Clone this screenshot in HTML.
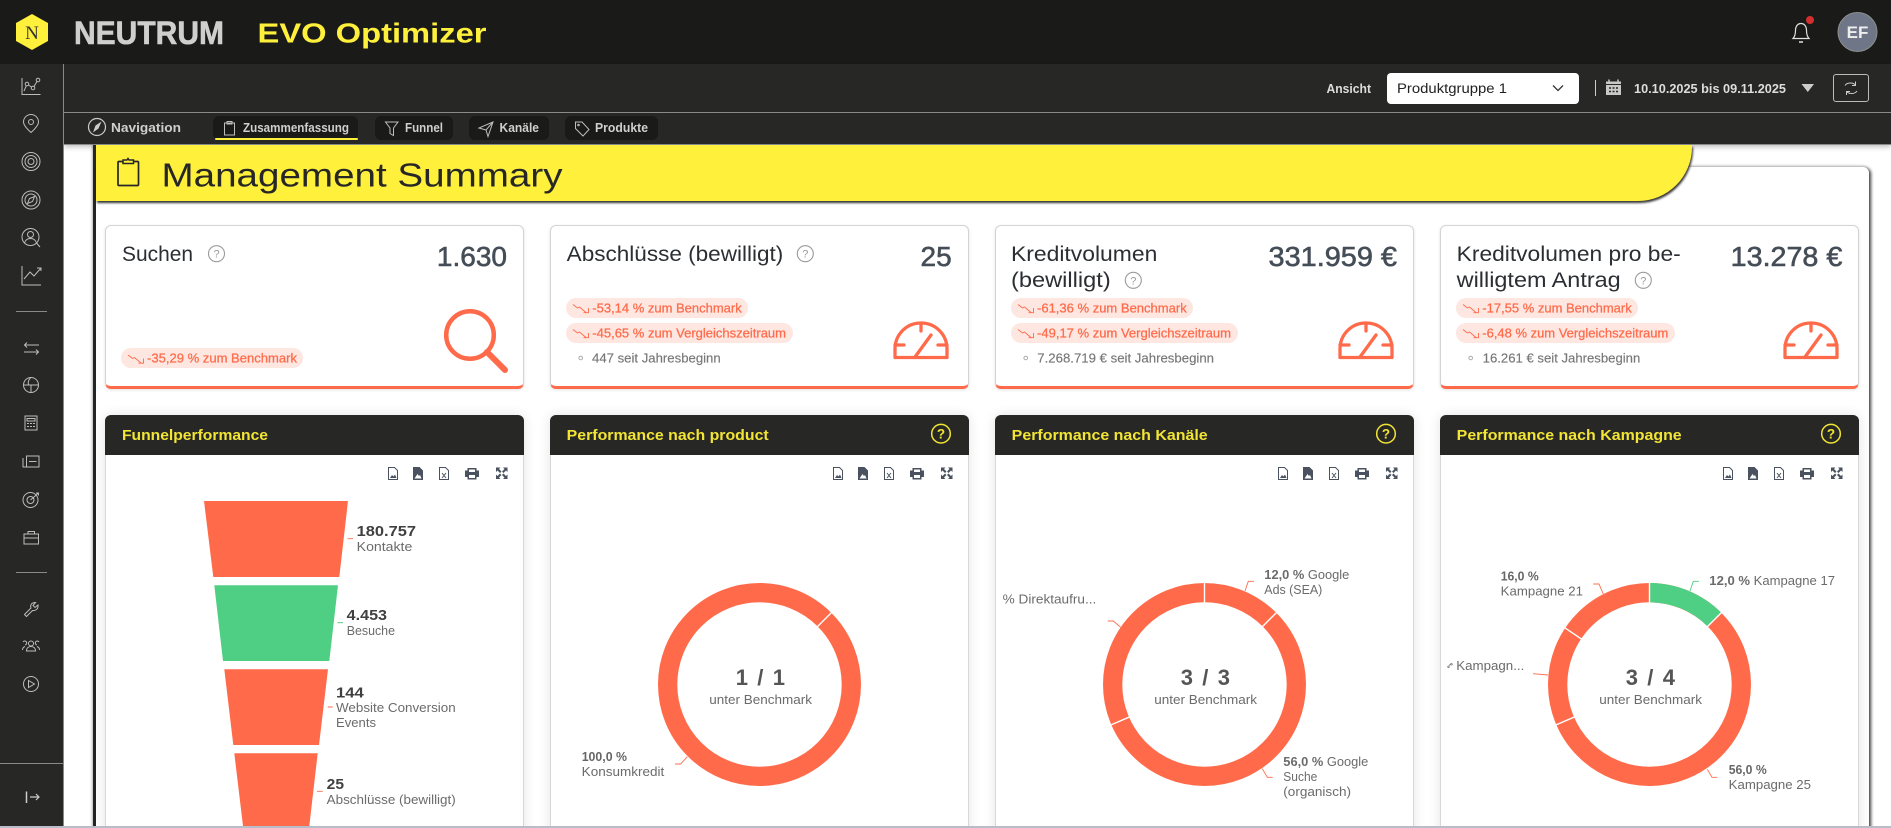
<!DOCTYPE html>
<html lang="de"><head><meta charset="utf-8"><title>EVO Optimizer</title>
<style>
html,body{margin:0;padding:0;width:1891px;height:828px;overflow:hidden;background:#fff;font-family:"Liberation Sans",sans-serif}
#root{position:relative;width:1891px;height:828px;overflow:hidden;background:#fff}
.b{position:absolute;box-sizing:border-box}
.kpi{top:225px;width:419px;height:164px;background:#fff;border:1px solid #d4d4d4;border-bottom:3px solid #ff6b4a;border-radius:6px;box-shadow:0 1px 3px rgba(0,0,0,.12)}
.chart{top:415px;width:419px;height:420px;background:#fff;border:1px solid #d8d8d8;border-top:0;border-radius:6px 6px 0 0;box-shadow:0 0 12px rgba(0,0,0,.11)}
.chart i{display:block;position:absolute;left:-1px;right:-1px;top:0;height:40px;background:#272726;border-radius:6px 6px 0 0}
svg{position:absolute;left:0;top:0}
text{font-family:"Liberation Sans",sans-serif}
.ti{font-size:21px;fill:#2b2f33}
.va{font-size:28px;fill:#454d57;stroke:#454d57;stroke-width:.6}
.bd{font-size:12.7px;fill:#ff6b4a;stroke:#ff6b4a;stroke-width:.25}
.se{font-size:12.7px;fill:#777;stroke:#777;stroke-width:.15}
.ch{font-size:14.5px;font-weight:bold;fill:#f2e535}
.lb{font-size:12.5px;fill:#6b6b6b}
.lbb{font-size:12.5px;fill:#666;font-weight:bold}
.fv{font-size:15px;font-weight:bold;fill:#404040}
.c1{font-size:22px;font-weight:bold;fill:#555}
.ic{fill:none;stroke:#bdbdbd;stroke-width:1}
.nv{font-size:12.5px;font-weight:bold;fill:#cfcfcf}
</style></head><body><div id="root">
<div class="b" style="left:0;top:0;width:1891px;height:64px;background:#1a1a18"></div>
<div class="b" style="left:64px;top:64px;width:1827px;height:81px;background:#272726;border-bottom:1px solid #8a8a8a;box-shadow:0 2px 5px rgba(0,0,0,.25)"></div>
<div class="b" style="left:0;top:64px;width:64px;height:764px;background:#272726;border-right:1px solid #8a8a8a"></div>
<div class="b" style="left:64px;top:112px;width:1827px;height:1px;background:#8a8a8a"></div>
<div class="b" style="left:93px;top:145px;width:3px;height:683px;background:#272726;box-shadow:-1px 0 2px rgba(0,0,0,.3)"></div>
<div class="b" style="left:96px;top:167px;width:1773px;height:670px;background:#fff;border-radius:6px;box-shadow:2px 1px 3px #444,0 -1px 3px rgba(0,0,0,.2)"></div>
<div class="b" style="left:96px;top:145px;width:1596px;height:56px;background:#fff03c;border-radius:0 0 54px 0;box-shadow:1px 2px 2px #333"></div>
<div class="b kpi" style="left:105px"></div><div class="b kpi" style="left:550px"></div><div class="b kpi" style="left:995px"></div><div class="b kpi" style="left:1440px"></div>
<div class="b chart" style="left:105px"><i></i></div><div class="b chart" style="left:550px"><i></i></div><div class="b chart" style="left:995px"><i></i></div><div class="b chart" style="left:1440px"><i></i></div>
<div class="b" style="left:213px;top:116px;width:145px;height:24px;background:#1a1a18;border-radius:6px"></div>
<div class="b" style="left:215px;top:138px;width:143px;height:2px;background:#fff03c;border-radius:1px"></div>
<div class="b" style="left:375px;top:116px;width:78px;height:24px;background:#1a1a18;border-radius:6px"></div>
<div class="b" style="left:469px;top:116px;width:80px;height:24px;background:#1a1a18;border-radius:6px"></div>
<div class="b" style="left:565px;top:116px;width:93px;height:24px;background:#1a1a18;border-radius:6px"></div>
<div class="b" style="left:1387px;top:73px;width:192px;height:31px;background:#fff;border-radius:4px"></div>
<div class="b" style="left:1833px;top:74px;width:36px;height:28px;border:1px solid #bbb;border-radius:3px"></div>

<svg width="1891" height="828" viewBox="0 0 1891 828">
<defs>
<g id="h"><circle r="8" fill="none" stroke="#9a9a9a" stroke-width="1.1"/><text y="4" text-anchor="middle" font-size="11" fill="#9a9a9a">?</text></g>
<g id="hy"><circle r="9.3" fill="none" stroke="#f2e535" stroke-width="1.5"/><text y="4.8" text-anchor="middle" font-size="13.5" font-weight="bold" fill="#f2e535">?</text></g>
<path id="t" d="M0 .5L4.5 4L6.5 3L13 8.5M15.5 4V8.7H10.5" fill="none" stroke="#ff6b4a" stroke-width=".9"/>
<g id="g" fill="none" stroke="#ff6b4a" stroke-width="3.3" stroke-linejoin="round" stroke-linecap="round">
<path d="M2 36.5V28C2 14 13 2 28 2S54 14 54 28V36.5Z"/><path d="M28 2V10M2 24H11M54 24H45M22 36L38 14"/></g>
<g id="tb">
<g fill="none" stroke="#49525e" stroke-width="1"><path d="M283.500 467.500H289.500L292.500 470.500V479.500H283.500Z"/></g><path d="M285 478L287 475L288.500 476.500L290 474.500L291.500 478Z" fill="#49525e"/>
<path d="M308 467H314.500L318 470.500V480H308Z" fill="#49525e"/><path d="M309.500 478.500L312.500 474L314 476L315 475L316.500 478.500Z" fill="#fff"/>
<g fill="none" stroke="#49525e" stroke-width="1"><path d="M334.500 467.500H340.500L343.500 470.500V479.500H334.500Z"/><path d="M337 473L341 478M341 473L337 478"/></g>
<path d="M362.500 468H371.500V470.500H374V477H371.500V479.500H362.500V477H360V470.500H362.500ZM364 469.500V472H370V469.500ZM364 475V478H370V475Z" fill="#49525e" fill-rule="evenodd"/>
<path d="M391 467.500H395.500L394 469L396.500 471.500L395 473L392.500 470.500L391 472ZM402.500 467.500H398L399.500 469L397 471.500L398.500 473L401 470.500L402.500 472ZM391 479H395.500L394 477.500L396.500 475L395 473.500L392.500 476L391 474.500ZM402.500 479H398L399.500 477.500L397 475L398.500 473.500L401 476L402.500 474.500Z" fill="#49525e"/>
</g>
</defs>

<!-- top bar -->
<path d="M32 14L48 23V41L32 50L16 41V23Z" fill="#fff03c"/>
<text x="32" y="39" text-anchor="middle" font-size="19" style="font-family:'Liberation Serif',serif" fill="#333">N</text>
<text x="74" y="44" font-size="32" font-weight="bold" fill="#cfcfcf" stroke="#cfcfcf" stroke-width=".6" textLength="150" lengthAdjust="spacingAndGlyphs">NEUTRUM</text>
<text x="257.500" y="42.500" font-size="28" font-weight="bold" fill="#fff03c" textLength="229" lengthAdjust="spacingAndGlyphs">EVO Optimizer</text>
<path d="M1793 38.500c1.800-2 2.500-4 2.500-8c0-4 2-7 5.500-7s5.500 3 5.500 7c0 4 .7 6 2.500 8Z" fill="none" stroke="#e0e0e0" stroke-width="1.200"/><path d="M1799 42h4" stroke="#e0e0e0" stroke-width="1.500"/>
<circle cx="1810" cy="20" r="4" fill="#d32f2f"/>
<circle cx="1857.500" cy="32" r="19.500" fill="#6e7688" stroke="#8f8f8f" stroke-width="1"/>
<text x="1857.500" y="38" text-anchor="middle" font-size="17" font-weight="bold" fill="#eee">EF</text>

<!-- toolbar -->
<text x="1326.500" y="93" font-size="12.500" font-weight="bold" fill="#ddd" textLength="44.500" lengthAdjust="spacingAndGlyphs">Ansicht</text>
<text x="1397" y="93" font-size="13.500" fill="#222" textLength="110" lengthAdjust="spacingAndGlyphs">Produktgruppe 1</text>
<path d="M1553 85.500L1558 90.500L1563 85.500" fill="none" stroke="#333" stroke-width="1.300"/>
<path d="M1595.500 80V96" stroke="#ccc" stroke-width="1"/>
<path d="M1606 81.500H1621V95H1606Z" fill="#c8c8c8"/><path d="M1609 79.500V82M1618 79.500V82" stroke="#c8c8c8" stroke-width="1.500"/>
<path d="M1606 84.500H1621" stroke="#272726" stroke-width="1"/><path d="M1609 88h2M1612.500 88h2M1616 88h2M1609 91.500h2M1612.500 91.500h2M1616 91.500h2" stroke="#272726" stroke-width="1.500"/>
<text x="1634" y="93" font-size="12.500" font-weight="bold" fill="#ddd" textLength="152" lengthAdjust="spacingAndGlyphs">10.10.2025 bis 09.11.2025</text>
<path d="M1801.500 84H1814L1807.800 92Z" fill="#ccc"/>
<path d="M1845 85.500c2-3 7.500-3.500 10.500-.5M1855.500 81.500V85.500H1852M1857 91c-2 3-7.500 3.500-10.500.5M1846.500 95V91.500H1850" fill="none" stroke="#ccc" stroke-width="1"/>

<!-- nav -->
<circle cx="97" cy="127" r="8.500" fill="none" stroke="#ccc" stroke-width="1.200"/><path d="M93 132.500L95.500 125.500L101.500 121.500L98.500 128.500Z" fill="#ccc"/>
<text class="nv" x="111" y="132" textLength="70" lengthAdjust="spacingAndGlyphs">Navigation</text>
<rect class="ic" x="224.500" y="123" width="10" height="12"/><rect class="ic" x="227" y="121.500" width="5" height="2.500"/>
<text class="nv" x="243" y="132" textLength="106" lengthAdjust="spacingAndGlyphs">Zusammenfassung</text>
<path class="ic" d="M385.500 122H398L393.500 128V135.500L390 133.500V128Z"/>
<text class="nv" x="405" y="132" textLength="38" lengthAdjust="spacingAndGlyphs">Funnel</text>
<path class="ic" d="M493 122L479 128L486 130L488 136.500ZM486 130L493 122"/>
<text class="nv" x="499.500" y="132" textLength="39.500" lengthAdjust="spacingAndGlyphs">Kanäle</text>
<path class="ic" d="M575.500 122H582L589 129.500L583 136L575.500 128.500Z"/><circle class="ic" cx="578.500" cy="125" r=".8"/>
<text class="nv" x="595" y="132" textLength="53" lengthAdjust="spacingAndGlyphs">Produkte</text>

<!-- sidebar -->
<g class="ic">
<path d="M22 78V94.500H40.500"/><circle cx="27" cy="84" r="1.800"/><circle cx="33" cy="88" r="1.800"/><circle cx="38" cy="80" r="1.800"/><path d="M24 91L26.300 85.700M28.500 85L31.500 87M34 86.500L37 81.500"/>
<path d="M31 132.500C26 128 23.500 125 23.500 122a7.500 7.500 0 0 1 15 0C38.500 125 36 128 31 132.500Z"/><circle cx="31" cy="122" r="2.500"/>
<circle cx="31" cy="161.500" r="9"/><circle cx="31" cy="161.500" r="6"/><circle cx="31" cy="161.500" r="3"/>
<circle cx="31" cy="200" r="9"/><circle cx="31" cy="200" r="6"/><path d="M27.500 203.500L29.500 198.500L34.500 196.500L32.500 201.500Z"/>
<circle cx="30.500" cy="237" r="8.500"/><circle cx="30.500" cy="234.500" r="3"/><path d="M24.500 243c1-3.500 3-4.500 6-4.500s5 1 6 4.500M36.500 243L40 247"/>
<path d="M22 266V285H41"/><path d="M24 279L30 272L34 276L41 268M37 268H41V271"/>
<path d="M39 345H24.500M27 342.500L24.500 345L27 347.500M24 352H38.500M36 349.500L38.500 352L36 354.500"/>
<circle cx="31" cy="385" r="7.500"/><path d="M23.500 385H38.500M31 385V392.500M31 377.500C28 380 28 383 28.500 385"/>
<rect x="25" y="416" width="12" height="14"/><path d="M27 418.500H35V421H27ZM27 423.500h2M30 423.500h2M33 423.500h2M27 426.500h2M30 426.500h2M33 426.500h2"/>
<rect x="26.500" y="456" width="12.500" height="11"/><path d="M23 458V467H26.500M29 461.500H36.500"/>
<circle cx="30.500" cy="500" r="7.500"/><circle cx="30.500" cy="500" r="3.500"/><path d="M30.500 500L38.500 493M36 493H38.500V495.500"/>
<rect x="24" y="534" width="14.500" height="10"/><path d="M24 538H38.500M28 534V531.500H34.500V534"/>
<path d="M24.500 614.500L31 608C30 605 31.500 602.500 35.500 602.500L33 605.500L35 607.500L38 605C38.500 609 35.500 611 32.500 610.500L26.500 616.500Z"/>
<circle cx="31" cy="643.500" r="2.500"/><path d="M26.500 651c0-3 2-4.500 4.500-4.500s4.500 1.500 4.500 4.500ZM25 645a2 2 0 1 0-2-3M22.500 650c0-2 1-3 2.500-3.500M37 645a2 2 0 1 1 2-3M39.500 650c0-2-1-3-2.500-3.500"/>
<circle cx="31" cy="684" r="7.500"/><path d="M28.500 680.500L34.500 684L28.500 687.500Z"/>
</g>
<g stroke="#8a8a8a" stroke-width="1"><path d="M16 311.500H47M16 572.500H47M0 763.500H63"/></g>
<path d="M26.500 791.500V803" stroke="#ccc" stroke-width="1.500"/><path d="M30 797H39M36 794L39 797L36 800" fill="none" stroke="#ccc" stroke-width="1.200"/>

<!-- header -->
<rect x="118" y="161.500" width="20.500" height="24" fill="none" stroke="#272726" stroke-width="1.700" rx="1"/>
<path d="M123 163.500V160H127L128 158.500L129 160H133.500V163.500Z" fill="#fff03c" stroke="#272726" stroke-width="1.500"/>
<text x="161.500" y="186.700" font-size="33.500" fill="#272726" textLength="401" lengthAdjust="spacingAndGlyphs">Management Summary</text>

<!-- KPI 1 -->
<text class="ti" x="122" y="261" textLength="71" lengthAdjust="spacingAndGlyphs">Suchen</text><use href="#h" x="216.500" y="253.700"/>
<text class="va" x="507" y="266" text-anchor="end">1.630</text>
<rect x="121" y="348" width="182" height="20" rx="10" fill="#fee6e1"/><use href="#t" x="128" y="354.500"/>
<text class="bd" x="147" y="362.300" textLength="150" lengthAdjust="spacingAndGlyphs">-35,29 % zum Benchmark</text>
<circle cx="470" cy="335" r="23.800" fill="none" stroke="#ff6b4a" stroke-width="4.500"/><path d="M487 352L505 370" stroke="#ff6b4a" stroke-width="6" stroke-linecap="round"/>

<!-- KPI 2 -->
<text class="ti" x="566.700" y="261" textLength="216.600" lengthAdjust="spacingAndGlyphs">Abschlüsse (bewilligt)</text><use href="#h" x="805.300" y="253.700"/>
<text class="va" x="951.700" y="266" text-anchor="end">25</text>
<rect x="566" y="298" width="182" height="20" rx="10" fill="#fee6e1"/><use href="#t" x="573" y="304"/>
<text class="bd" x="592.300" y="312.300" textLength="149.400" lengthAdjust="spacingAndGlyphs">-53,14 % zum Benchmark</text>
<rect x="566" y="323" width="227" height="20" rx="10" fill="#fee6e1"/><use href="#t" x="573" y="329"/>
<text class="bd" x="592.300" y="337.300" textLength="193.700" lengthAdjust="spacingAndGlyphs">-45,65 % zum Vergleichszeitraum</text>
<circle cx="580.700" cy="358" r="1.800" fill="none" stroke="#aaa"/>
<text class="se" x="592" y="362.300" textLength="128.700" lengthAdjust="spacingAndGlyphs">447 seit Jahresbeginn</text>
<use href="#g" x="893" y="321"/>

<!-- KPI 3 -->
<text class="ti" x="1011" y="261" textLength="146.300" lengthAdjust="spacingAndGlyphs">Kreditvolumen</text>
<text class="ti" x="1011" y="287" textLength="99.700" lengthAdjust="spacingAndGlyphs">(bewilligt)</text><use href="#h" x="1133.300" y="280.300"/>
<text class="va" x="1397" y="266" text-anchor="end" textLength="128.500" lengthAdjust="spacingAndGlyphs">331.959 €</text>
<rect x="1011" y="298" width="182" height="20" rx="10" fill="#fee6e1"/><use href="#t" x="1018" y="304"/>
<text class="bd" x="1037" y="312.300" textLength="149.700" lengthAdjust="spacingAndGlyphs">-61,36 % zum Benchmark</text>
<rect x="1011" y="323" width="227" height="20" rx="10" fill="#fee6e1"/><use href="#t" x="1018" y="329"/>
<text class="bd" x="1037" y="337.300" textLength="194" lengthAdjust="spacingAndGlyphs">-49,17 % zum Vergleichszeitraum</text>
<circle cx="1025.700" cy="358" r="1.800" fill="none" stroke="#aaa"/>
<text class="se" x="1037.300" y="362.300" textLength="176.700" lengthAdjust="spacingAndGlyphs">7.268.719 € seit Jahresbeginn</text>
<use href="#g" x="1338" y="321"/>

<!-- KPI 4 -->
<text class="ti" x="1456.700" y="261" textLength="224" lengthAdjust="spacingAndGlyphs">Kreditvolumen pro be-</text>
<text class="ti" x="1456.700" y="287" textLength="164" lengthAdjust="spacingAndGlyphs">willigtem Antrag</text><use href="#h" x="1643.300" y="280.300"/>
<text class="va" x="1842.300" y="266" text-anchor="end" textLength="111.600" lengthAdjust="spacingAndGlyphs">13.278 €</text>
<rect x="1456" y="298" width="182" height="20" rx="10" fill="#fee6e1"/><use href="#t" x="1463" y="304"/>
<text class="bd" x="1482.300" y="312.300" textLength="149.400" lengthAdjust="spacingAndGlyphs">-17,55 % zum Benchmark</text>
<rect x="1456" y="323" width="219" height="20" rx="10" fill="#fee6e1"/><use href="#t" x="1463" y="329"/>
<text class="bd" x="1482.300" y="337.300" textLength="186" lengthAdjust="spacingAndGlyphs">-6,48 % zum Vergleichszeitraum</text>
<circle cx="1470.700" cy="358" r="1.800" fill="none" stroke="#aaa"/>
<text class="se" x="1482.700" y="362.300" textLength="157.600" lengthAdjust="spacingAndGlyphs">16.261 € seit Jahresbeginn</text>
<use href="#g" x="1783" y="321"/>

<!-- chart headers -->
<text class="ch" x="122" y="440" textLength="146" lengthAdjust="spacingAndGlyphs">Funnelperformance</text>
<text class="ch" x="566.700" y="440" textLength="202" lengthAdjust="spacingAndGlyphs">Performance nach product</text><use href="#hy" x="941" y="433.700"/>
<text class="ch" x="1011.700" y="440" textLength="196" lengthAdjust="spacingAndGlyphs">Performance nach Kanäle</text><use href="#hy" x="1386" y="433.700"/>
<text class="ch" x="1456.700" y="440" textLength="225" lengthAdjust="spacingAndGlyphs">Performance nach Kampagne</text><use href="#hy" x="1831" y="433.700"/>
<use href="#tb" x="105"/><use href="#tb" x="550"/><use href="#tb" x="995"/><use href="#tb" x="1440"/>

<!-- funnel -->
<path d="M204 501H348L339.300 577H213.300Z" fill="#ff6b4a"/>
<path d="M214.300 585.300H338L329.300 661H223Z" fill="#4fcf84"/>
<path d="M224.300 669.300H328L319 745H233.300Z" fill="#ff6b4a"/>
<path d="M234.300 753.300H317.700L309.300 826H243Z" fill="#ff6b4a"/>
<path d="M347.500 538.700H353M327.700 707H332.700M317 791.300H322.700" stroke="#ff6b4a" stroke-width=".9"/>
<path d="M337.500 622.700H343" stroke="#4fcf84" stroke-width="1"/>
<text class="fv" x="356.700" y="536" textLength="59.300" lengthAdjust="spacingAndGlyphs">180.757</text>
<text class="lb" x="356.700" y="551" textLength="55.600" lengthAdjust="spacingAndGlyphs">Kontakte</text>
<text class="fv" x="346.700" y="620" textLength="40.300" lengthAdjust="spacingAndGlyphs">4.453</text>
<text class="lb" x="346.700" y="635" textLength="48.300" lengthAdjust="spacingAndGlyphs">Besuche</text>
<text class="fv" x="336" y="697.300" textLength="27.700" lengthAdjust="spacingAndGlyphs">144</text>
<text class="lb" x="336" y="712" textLength="119.700" lengthAdjust="spacingAndGlyphs">Website Conversion</text>
<text class="lb" x="336" y="727" textLength="40" lengthAdjust="spacingAndGlyphs">Events</text>
<text class="fv" x="326.700" y="789" textLength="17.300" lengthAdjust="spacingAndGlyphs">25</text>
<text class="lb" x="326.700" y="804" textLength="129" lengthAdjust="spacingAndGlyphs">Abschlüsse (bewilligt)</text>

<!-- donut 1 -->
<circle cx="759.500" cy="684.500" r="91.850" fill="none" stroke="#ff6b4a" stroke-width="19.300"/>
<path d="M816.800 627.200L832.300 611.700" stroke="#fff" stroke-width="1.400"/>
<text class="c1" x="735.700" y="685" textLength="49.300" lengthAdjust="spacing">1 / 1</text>
<text class="lb" x="709.300" y="704" textLength="102.700" lengthAdjust="spacingAndGlyphs">unter Benchmark</text>
<text class="lbb" x="581.700" y="761" textLength="45.300" lengthAdjust="spacingAndGlyphs">100,0 %</text>
<text class="lb" x="581.700" y="776" textLength="82.600" lengthAdjust="spacingAndGlyphs">Konsumkredit</text>
<path d="M675 764H680.700L687.300 756.700" fill="none" stroke="#ff6b4a" stroke-width=".9"/>

<!-- donut 2 -->
<circle cx="1204.500" cy="684.500" r="91.850" fill="none" stroke="#ff6b4a" stroke-width="19.300"/>
<path d="M1204.500 603.500V581.500M1261.800 627.200L1277.300 611.700M1130.100 716.700L1109.900 725.400" stroke="#fff" stroke-width="1.400"/>
<text class="c1" x="1180.700" y="685" textLength="49.300" lengthAdjust="spacing">3 / 3</text>
<text class="lb" x="1154.300" y="704" textLength="102.700" lengthAdjust="spacingAndGlyphs">unter Benchmark</text>
<text class="lb" x="1264.300" y="579" textLength="85" lengthAdjust="spacingAndGlyphs"><tspan font-weight="bold">12,0 %</tspan> Google</text>
<text class="lb" x="1264.300" y="594" textLength="58" lengthAdjust="spacingAndGlyphs">Ads (SEA)</text>
<text class="lb" x="1002.700" y="603.300" textLength="93.600" lengthAdjust="spacingAndGlyphs">% Direktaufru...</text>
<text class="lb" x="1283.300" y="766" textLength="85" lengthAdjust="spacingAndGlyphs"><tspan font-weight="bold">56,0 %</tspan> Google</text>
<text class="lb" x="1283.300" y="781" textLength="34" lengthAdjust="spacingAndGlyphs">Suche</text>
<text class="lb" x="1283.300" y="796" textLength="67.700" lengthAdjust="spacingAndGlyphs">(organisch)</text>
<path d="M1245 591L1248.300 581.300H1254M1107.700 621H1113.300L1120.700 627.300M1262.300 768.700L1267.300 777.300H1272.700" fill="none" stroke="#ff6b4a" stroke-width=".9"/>

<!-- donut 3 -->
<circle cx="1649.500" cy="684.500" r="91.850" fill="none" stroke="#ff6b4a" stroke-width="19.300"/>
<path d="M1649.500 592.650A91.850 91.850 0 0 1 1714.450 619.550" fill="none" stroke="#4fcf84" stroke-width="19.300"/>
<path d="M1649.500 603.500V581.500M1706.800 627.200L1722.300 611.700M1575.100 716.700L1554.900 725.400M1582.200 639.500L1563.900 627.200" stroke="#fff" stroke-width="1.400"/>
<text class="c1" x="1625.700" y="685" textLength="49.300" lengthAdjust="spacing">3 / 4</text>
<text class="lb" x="1599.300" y="704" textLength="102.700" lengthAdjust="spacingAndGlyphs">unter Benchmark</text>
<text class="lbb" x="1500.700" y="580.700" textLength="38" lengthAdjust="spacingAndGlyphs">16,0 %</text>
<text class="lb" x="1500.700" y="595.700" textLength="82.300" lengthAdjust="spacingAndGlyphs">Kampagne 21</text>
<text class="lb" x="1709.300" y="585" textLength="125.700" lengthAdjust="spacingAndGlyphs"><tspan font-weight="bold">12,0 %</tspan> Kampagne 17</text>
<text class="lb" x="1456.300" y="670" textLength="68" lengthAdjust="spacingAndGlyphs">Kampagn...</text>
<path d="M1449 665.500l2-2M1448.500 666a.8.8 0 1 0 .01 0M1451.500 663.500a.8.8 0 1 0 .01 0" fill="none" stroke="#777" stroke-width=".8"/>
<text class="lbb" x="1728.700" y="774" textLength="38" lengthAdjust="spacingAndGlyphs">56,0 %</text>
<text class="lb" x="1728.700" y="789" textLength="82.300" lengthAdjust="spacingAndGlyphs">Kampagne 25</text>
<path d="M1593.300 584H1599L1603.300 594M1533 673.700L1548 675M1707.300 769.300L1712 777.300H1717.300" fill="none" stroke="#ff6b4a" stroke-width=".9"/>
<path d="M1690 591L1693.300 581.300H1699" fill="none" stroke="#4fcf84" stroke-width=".9"/>

<rect x="0" y="826" width="1891" height="2" fill="#b9bdc9"/>
</svg>
</div></body></html>
